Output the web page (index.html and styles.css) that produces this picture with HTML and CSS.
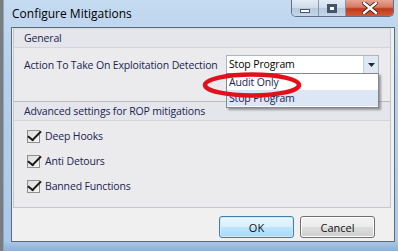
FILE: index.html
```html
<!DOCTYPE html>
<html lang="en">
<head>
    <meta charset="UTF-8">
    <title>Configure Mitigations</title>
    <link rel="stylesheet" href="styles.css">
</head>
<body>

<div class="window">
    <div class="titlebar">
        <span class="title">Configure Mitigations</span>
        <div class="caption-buttons">
            <span class="cap cap-min"><span class="min-glyph"></span></span>
            <span class="cap cap-max"><span class="max-glyph"></span></span>
            <span class="cap cap-close">
                <svg width="16" height="12" viewBox="0 0 16 12">
                    <path d="M2 1 L14 11 M14 1 L2 11" stroke="#3a1010" stroke-width="4" stroke-linecap="square"/>
                    <path d="M2 1 L14 11 M14 1 L2 11" stroke="#ffffff" stroke-width="2.4" stroke-linecap="square"/>
                </svg>
            </span>
        </div>
    </div>

    <div class="client">
        <div class="panel">
            <div class="section-head">General</div>
            <div class="section-body general">
                <label class="field-label">Action To Take On Exploitation Detection</label>
                <div class="combo">
                    <span class="combo-text">Stop Program</span>
                    <span class="combo-arrow">
                        <svg width="7" height="4" viewBox="0 0 7 4"><path d="M0 0 H7 L3.5 4 Z" fill="#1d2a3c"/></svg>
                    </span>
                </div>
            </div>
            <div class="section-head second">Advanced settings for ROP mitigations</div>
            <div class="section-body checks">
                <div class="check-row"><span class="checkbox"></span>Deep Hooks</div>
                <div class="check-row"><span class="checkbox"></span>Anti Detours</div>
                <div class="check-row"><span class="checkbox"></span>Banned Functions</div>
            </div>
        </div>
        <div class="buttons">
            <button class="btn btn-default" type="button">OK</button>
            <button class="btn" type="button">Cancel</button>
        </div>

        <!-- open dropdown and the red marker drawn over the form -->
        <div class="dropdown-list">
            <div class="opt">Audit Only</div>
            <div class="opt opt-hover">Stop Program</div>
        </div>
        <svg class="marker" width="100" height="28" viewBox="0 0 100 28">
            <ellipse cx="50" cy="14" rx="47" ry="10.5" fill="none" stroke="#e3101c" stroke-width="4.5"/>
        </svg>
    </div>
</div>

</body>
</html>
```

FILE: styles.css
```css
* {
    box-sizing: border-box;
}
body {
    margin: 0;
    width: 398px;
    height: 251px;
    overflow: hidden;
    background: #7a7d80;
    font-family: "Open Sans", "Noto Sans", sans-serif;
    font-size: 10.5px;
    letter-spacing: -0.15px;
    color: #1b2450;
}
.window {
    margin-left: 3px;
    width: 395px;
    height: 251px;
    padding: 0 1px 0 7px;
    background: linear-gradient(to bottom, #c4daf0 0%, #b5d0ec 30%, #aacaec 96%, #8fb0d4 100%);
    border-left: 1px solid #8aa6c4;
}
.titlebar {
    height: 27px;
    display: flex;
    justify-content: space-between;
    align-items: flex-start;
}
.title {
    margin-top: 5px;
    margin-left: 1px;
    font-size: 12px;
    letter-spacing: 0;
    color: #000;
}
.caption-buttons {
    display: flex;
    margin-right: 3px;
    border: 1px solid #5f7189;
    border-top: none;
    border-radius: 0 0 5px 5px;
    overflow: hidden;
    height: 17px;
}
.cap {
    display: flex;
    align-items: center;
    justify-content: center;
    height: 16px;
}
.cap-min, .cap-max {
    width: 27px;
    background: linear-gradient(to bottom, #e3ecf6 0%, #cfdbe9 50%, #b7c8dc 51%, #c7d7ea 100%);
    border-right: 1px solid #8597ad;
}
.min-glyph {
    width: 10px;
    height: 4px;
    margin-top: 5px;
    background: #fff;
    border: 1px solid #44546a;
}
.max-glyph {
    width: 10px;
    height: 9px;
    border: 1px solid #44546a;
    background: #fff;
    box-shadow: inset 0 0 0 2px #44546a, inset 0 0 0 3px #fff;
}
.cap-close {
    width: 47px;
    background: linear-gradient(to bottom, #e8a493 0%, #d47a62 45%, #c0391c 55%, #d45a36 100%);
}
.client {
    position: relative;
    width: 384px;
    height: 215px;
    border: 1px solid #5e6b78;
    background: #f0f0f0;
    padding: 0 3px 0 1px;
}
.panel {
    border: 1px solid #c3c6cc;
    border-top-color: #d8dade;
    background: #ebebee;
    height: 180px;
}
.section-head {
    height: 19px;
    padding-left: 10px;
    line-height: 18px;
    background: #e4e6eb;
    border-bottom: 1px solid #d3d5da;
}
.section-head.second {
    border-top: 1px solid #b9bcc3;
    height: 20px;
}
.section-body.general {
    height: 53px;
    display: flex;
    align-items: flex-start;
    padding: 7px 0 0 10px;
}
.field-label {
    width: 202px;
    padding-top: 3px;
    white-space: nowrap;
}
.combo {
    width: 153px;
    height: 19px;
    display: flex;
    background: #fff;
    border: 1px solid #abb4c2;
}
.combo-text {
    flex: 1;
    padding-left: 2px;
    line-height: 16px;
    color: #000;
}
.combo-arrow {
    width: 15px;
    display: flex;
    align-items: center;
    justify-content: center;
    background: #dfe8f4;
    border-left: 1px solid #c5d2e2;
}
.section-body.checks {
    padding: 3px 0 0 13px;
}
.check-row {
    display: flex;
    align-items: center;
    gap: 5px;
    height: 24px;
    margin-bottom: 1px;
}
.checkbox {
    position: relative;
    width: 13px;
    height: 13px;
    border: 1px solid #8f8f8f;
    background: linear-gradient(135deg, #dcdcdc, #f6f6f6);
}
.checkbox::after {
    content: "";
    position: absolute;
    left: 3px;
    top: -3px;
    width: 5px;
    height: 11px;
    border-right: 2px solid #1a1a1a;
    border-bottom: 2px solid #1a1a1a;
    transform: rotate(38deg) skewX(-6deg);
}
.buttons {
    display: flex;
    justify-content: flex-end;
    gap: 6px;
    padding: 8px 16px 0 0;
}
.btn {
    width: 75px;
    height: 22px;
    font-family: inherit;
    font-size: 11px;
    color: #111;
    border: 1px solid #707070;
    border-radius: 3px;
    background: linear-gradient(to bottom, #f2f2f2 0%, #ebebeb 50%, #dddddd 51%, #cfcfcf 100%);
    box-shadow: inset 0 0 0 1px #fcfcfc;
}
.btn-default {
    border-color: #3c7fb1;
    background: linear-gradient(to bottom, #eaf6fd 0%, #d9f0fc 50%, #bee6fd 51%, #a7d9f5 100%);
    box-shadow: inset 0 0 0 1px #cfeafd;
}
.dropdown-list {
    position: absolute;
    left: 214px;
    top: 45px;
    width: 153px;
    height: 35px;
    background: #fff;
    border: 1px solid #828790;
    box-shadow: 2px 2px 2px rgba(0, 0, 0, 0.35);
}
.opt {
    height: 16px;
    line-height: 17px;
    padding-left: 2px;
}
.opt-hover {
    background: #dde6f5;
}
.marker {
    position: absolute;
    left: 190px;
    top: 43px;
}
```
